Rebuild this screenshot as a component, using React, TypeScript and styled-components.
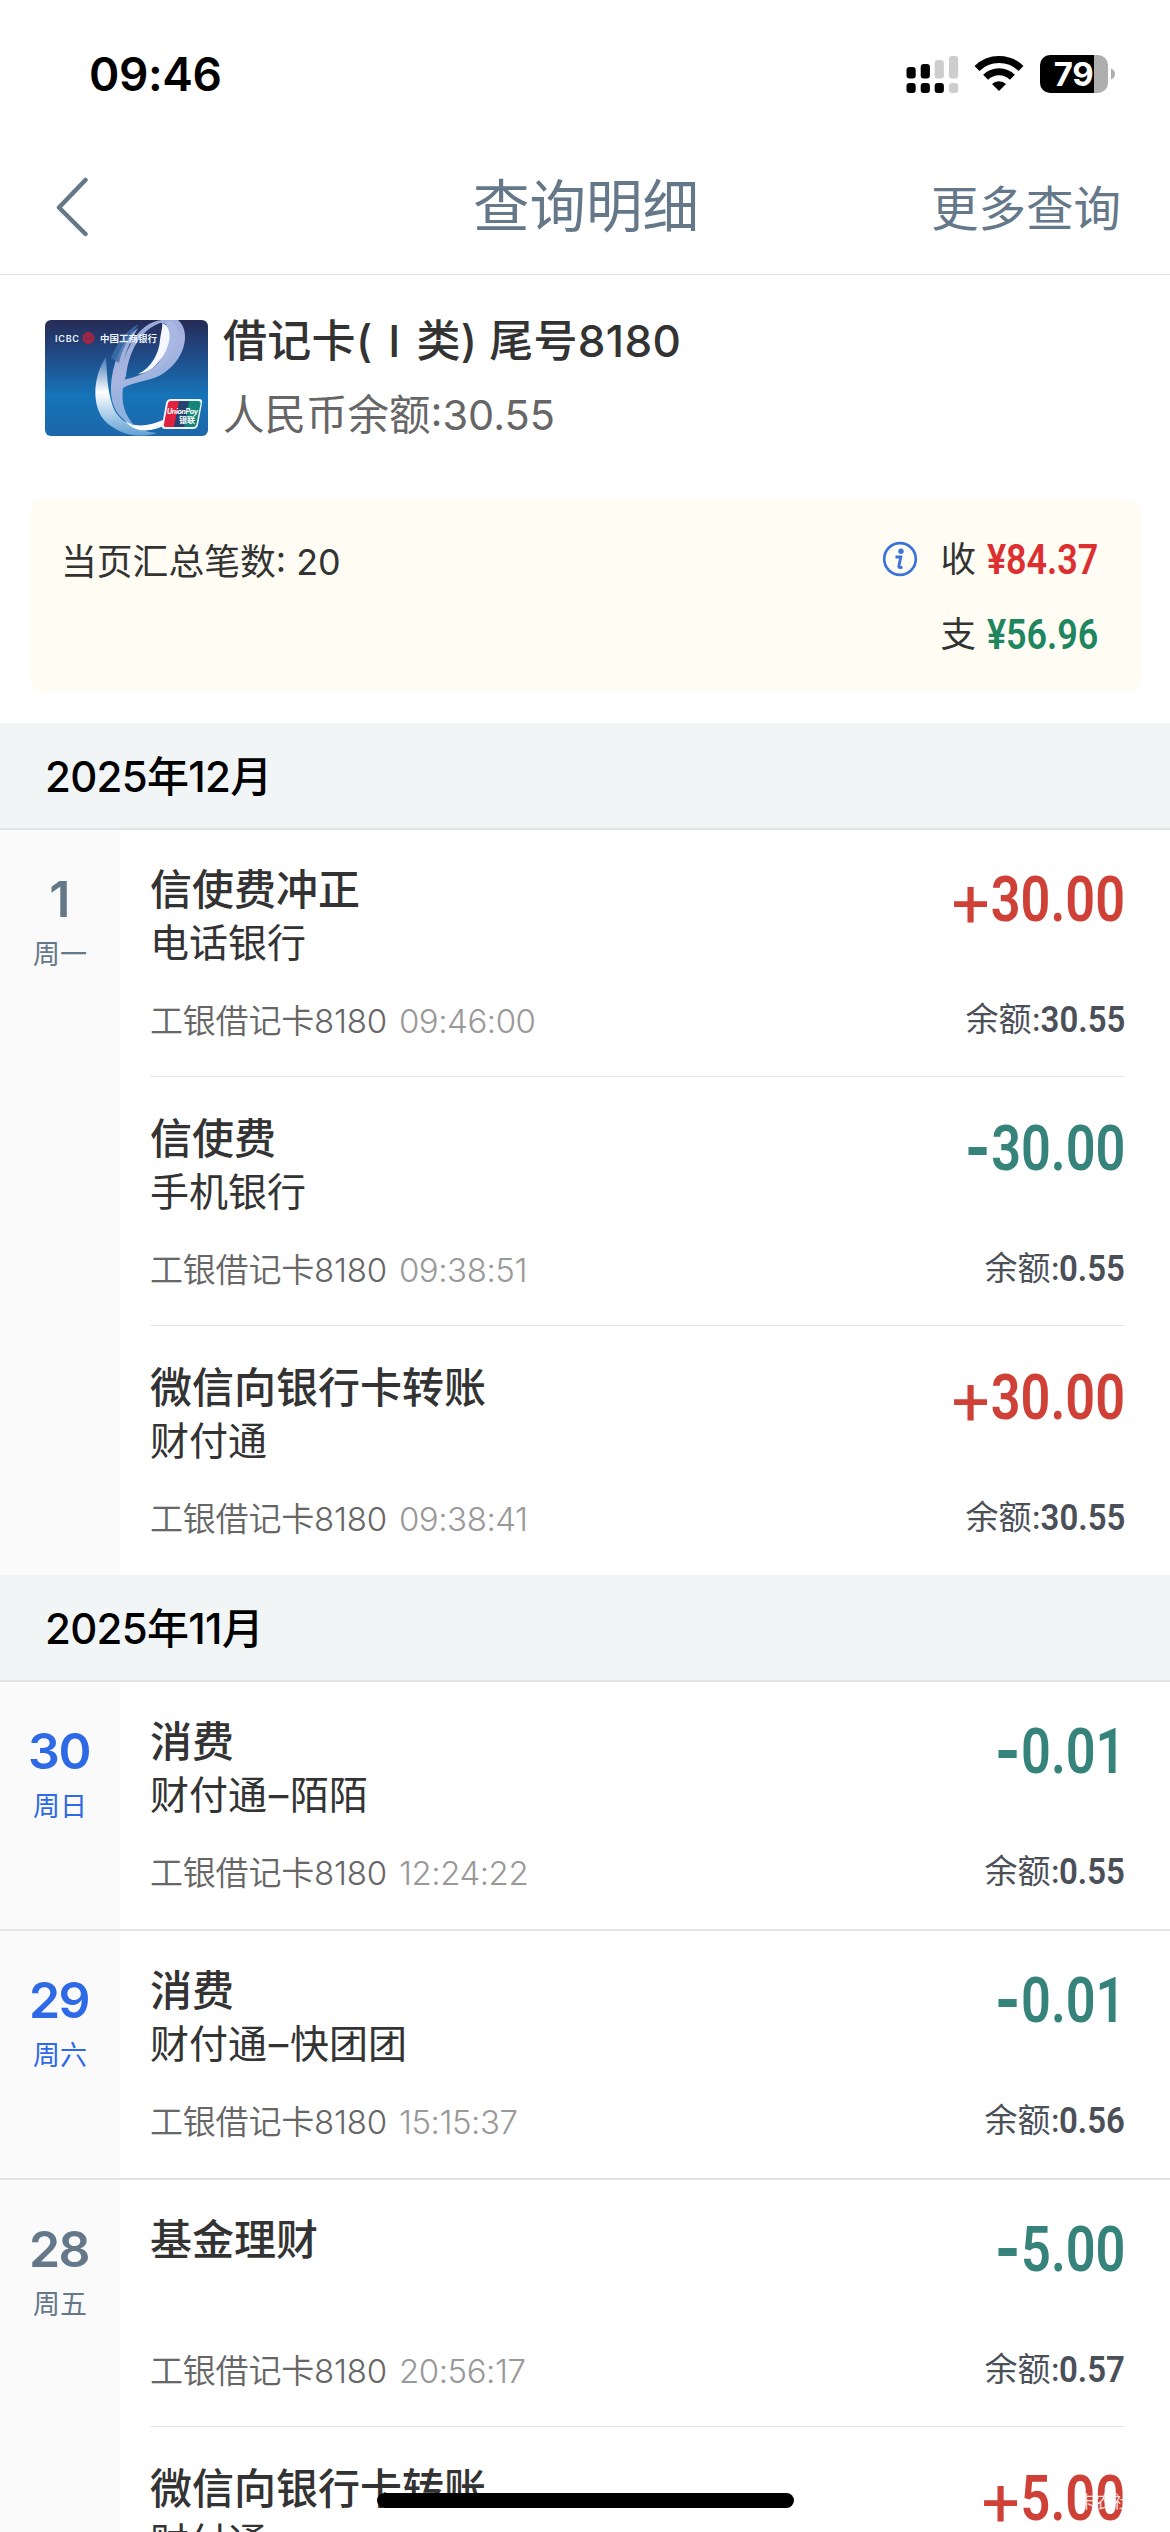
import React from "react";
import styled, { createGlobalStyle } from "styled-components";

const sans = `Inter, "Noto Sans CJK SC", sans-serif`;
const digits = `Roboto, "Noto Sans CJK SC", sans-serif`;

const GlobalStyle = createGlobalStyle`
  * { box-sizing: border-box; }
  body { margin: 0; background: #fff; }
`;

const Screen = styled.div`
  position: relative;
  width: 1170px;
  height: 2532px;
  overflow: hidden;
  background: #fff;
  color: #333;
  font-family: ${sans};
  white-space: nowrap;
`;

const StatusBar = styled.header`
  display: flex;
  justify-content: space-between;
  align-items: center;
  height: 148px;
  padding: 0 54px 0 89px;
`;

const Clock = styled.time`
  font-size: 46px;
  font-weight: 600;
  line-height: 60px;
  letter-spacing: -0.4px;
  color: #000;
`;

const NavBar = styled.nav`
  display: grid;
  grid-template-columns: 1fr auto 1fr;
  align-items: center;
  height: 127px;
  padding: 0 49px 5px 55px;
  border-bottom: 1px solid #e2e4e5;
  color: #64788a;
`;

const BackButton = styled.button`
  display: flex;
  width: 36px;
  height: 62px;
  margin-bottom: 2px;
  padding: 0;
  border: 0;
  background: none;
  color: inherit;
`;

const NavTitle = styled.h1`
  margin: 0 4px 0 0;
  padding-bottom: 4px;
  font-size: 56.5px;
  font-weight: 400;
  line-height: 80px;
`;

const NavAction = styled.a`
  justify-self: end;
  font-size: 47.5px;
  line-height: 70px;
`;

const Account = styled.section`
  display: flex;
  gap: 15px;
  height: 224px;
  padding: 45px 45px 0;
`;

const AccountText = styled.div`
  display: flex;
  flex-direction: column;
  margin-top: -12px;
`;

const AccountName = styled.div`
  font-size: 44px;
  font-weight: 500;
  line-height: 66px;
  letter-spacing: 0.3px;
`;

const Numeral = styled.span`
  display: inline-block;
  width: 44px;
  text-align: center;
`;

const AccountBalance = styled.div`
  margin-top: 9px;
  font-size: 41.5px;
  line-height: 64px;
  color: #666;
`;

const Summary = styled.section`
  display: flex;
  justify-content: space-between;
  height: 193px;
  margin: 0 29px 31px 30px;
  padding: 35px 43px 0 31px;
  border-radius: 14px;
  background: #fffdf3;
`;

const SummaryCount = styled.div`
  padding-top: 1px;
  font-size: 35.8px;
  line-height: 54px;
`;

const Totals = styled.div`
  display: flex;
  flex-direction: column;
  align-items: flex-end;
  gap: 22px;
`;

const TotalLine = styled.div`
  display: flex;
  align-items: center;
  height: 54px;
  margin-top: -1px;
  font-size: 35.5px;
  line-height: 54px;
`;

const InfoIcon = styled.svg`
  width: 36px;
  height: 36px;
  margin: 0 22px 3px 0;
`;

const TotalAmount = styled.span<{ $tone: string }>`
  display: inline-block;
  width: 111px;
  margin-left: 11px;
  direction: rtl;
  font-family: ${digits};
  font-size: 42px;
  font-weight: 600;
  color: ${(p) => p.$tone};
  & > bdi {
    display: inline-block;
    direction: ltr;
    transform: scaleX(0.855);
    transform-origin: right center;
  }
`;

const MonthHeader = styled.h2`
  height: 105px;
  margin: 0;
  padding: 2px 45px 0;
  background: #f1f5f6;
  font-size: 42px;
  font-weight: 500;
  line-height: 104px;
  letter-spacing: -0.7px;
  color: #000;
`;

const DayGroup = styled.section`
  display: flex;
  border-top: 2px solid #e1e3e4;
`;

const DayColumn = styled.aside<{ $weekend?: boolean }>`
  display: flex;
  flex-direction: column;
  align-items: center;
  width: 120px;
  padding-top: 38px;
  background: #fafafa;
  color: ${(p) => (p.$weekend ? "#2e6ae6" : "#64788a")};
`;

const DayNumber = styled.span`
  margin-right: 2px;
  font-size: 50px;
  font-weight: 560;
  line-height: 62px;
  letter-spacing: -1.5px;
`;

const Weekday = styled.span`
  margin-top: 5px;
  font-size: 27px;
  line-height: 40px;
`;

const Entries = styled.div`
  flex: 1;
  padding: 0 45px 0 30px;
`;

const Entry = styled.article`
  display: flex;
  justify-content: space-between;
  height: 249px;
  padding-top: 32px;
  border-bottom: 1px solid #e6e8e9;
  &:first-child {
    height: 247px;
    padding-top: 30px;
  }
  &:last-child {
    border-bottom: 0;
  }
`;

const EntryMain = styled.div`
  display: flex;
  flex-direction: column;
`;

const EntryTitle = styled.div`
  font-size: 42px;
  font-weight: 500;
  line-height: 60px;
`;

const EntrySub = styled.div`
  height: 54px;
  margin-top: -4px;
  font-size: 39px;
  line-height: 54px;
`;

const Dash = styled.span`
  display: inline-flex;
  justify-content: center;
  width: 23px;
`;

const EntryMeta = styled.div`
  margin-top: 27px;
  font-size: 33px;
  line-height: 48px;
  color: #666;
  font-weight: 350;
  letter-spacing: -0.2px;
`;

const EntryTime = styled.span`
  margin-left: 12px;
  letter-spacing: -0.45px;
  color: #999;
`;

const EntrySide = styled.div`
  display: flex;
  flex-direction: column;
  align-items: flex-end;
`;

const Amount = styled.div<{ $income?: boolean }>`
  display: flex;
  height: 80px;
  line-height: 80px;
  font-family: ${digits};
  font-size: 63px;
  font-weight: 560;
  color: ${(p) => (p.$income ? "#cf4037" : "#36837b")};
  transform: scaleX(0.83);
  transform-origin: right center;
`;

const Sign = styled.span<{ $income?: boolean }>`
  display: inline-block;
  padding-top: ${(p) => (p.$income ? 4 : 0)}px;
  margin-right: 1px;
  font-weight: ${(p) => (p.$income ? 400 : 600)};
  font-size: ${(p) => (p.$income ? 69 : 78)}px;
  transform: scaleX(${(p) => (p.$income ? 1.18 : 1.05)});
  transform-origin: right center;
`;

const Balance = styled.div`
  display: flex;
  align-items: center;
  height: 48px;
  margin-top: 55px;
  font-size: 33px;
  line-height: 48px;
  color: #4b4f58;
`;

const BalanceValue = styled.span<{ $width: number }>`
  display: flex;
  justify-content: flex-end;
  width: ${(p) => p.$width}px;
  font-family: ${digits};
  font-size: 37.5px;
  font-weight: 600;
  & > b {
    font-weight: 600;
    transform: scaleX(0.88);
    transform-origin: right center;
  }
`;

const HomeIndicator = styled.div`
  position: absolute;
  left: 377px;
  top: 2493px;
  width: 417px;
  height: 15px;
  border-radius: 8px;
  background: #000;
`;

const Watermark = styled.div`
  position: absolute;
  left: 1078px;
  top: 2490px;
  font-size: 17.5px;
  line-height: 24px;
  color: rgba(255, 255, 255, 0.85);
`;

function StatusIcons() {
  return (
    <svg width="212" height="44" viewBox="904 52 212 44">
      <g fill="#000">
        <rect x="906.5" y="67" width="9.2" height="11.5" rx="3" />
        <rect x="920.7" y="64" width="9.2" height="14.5" rx="3" />
        <rect x="906.5" y="83" width="9.2" height="10" rx="3" />
        <rect x="920.7" y="83" width="9.2" height="10" rx="3" />
        <rect x="934.7" y="83" width="9.2" height="10" rx="3" />
      </g>
      <g fill="#cdcdcd">
        <rect x="934.7" y="60" width="9.2" height="18.5" rx="3" />
        <rect x="949" y="56" width="9.2" height="22.5" rx="3" />
        <rect x="949" y="83" width="9.2" height="10" rx="3" />
      </g>
      <g fill="none" stroke="#000" strokeWidth="7">
        <path d="M977 68.5 A31.5 31.5 0 0 1 1021 68.5" />
        <path d="M985.6 77.2 A19 19 0 0 1 1012.4 77.2" />
      </g>
      <path d="M999 91 L992 84 A10 10 0 0 1 1006 84 Z" fill="#000" />
      <path d="M1050 55 H1094 V93 H1050 A10 10 0 0 1 1040 83 V65 A10 10 0 0 1 1050 55Z" fill="#000" />
      <path d="M1094 55 H1098 A10 10 0 0 1 1108 65 V83 A10 10 0 0 1 1098 93 H1094Z" fill="#aeaeae" />
      <path d="M1111 68.5 Q1115 70 1115 74 Q1115 78 1111 79.5Z" fill="#aeaeae" />
      <text x="1073.5" y="86" textAnchor="middle" fontFamily="Inter" fontSize="33" fontWeight="700" letterSpacing="-0.5" fill="#fff">79</text>
    </svg>
  );
}

const CardArt = styled.svg`
  flex: none;
  width: 163px;
  height: 116px;
`;

function BankCard() {
  return (
    <CardArt viewBox="0 0 163 116">
      <defs>
        <linearGradient id="cardBase" x1="0" y1="0" x2="0" y2="1">
          <stop offset="0" stopColor="#262b56" />
          <stop offset="0.3" stopColor="#204a86" />
          <stop offset="0.65" stopColor="#1674b8" />
          <stop offset="1" stopColor="#1d66aa" />
        </linearGradient>
        <linearGradient id="ribbon" x1="0" y1="0" x2="0.4" y2="1">
          <stop offset="0" stopColor="#8ba4d6" />
          <stop offset="0.5" stopColor="#aab4e0" />
          <stop offset="1" stopColor="#7fb0dd" />
        </linearGradient>
        <linearGradient id="ribbonLight" x1="0" y1="0" x2="0" y2="1">
          <stop offset="0" stopColor="#3e76b6" />
          <stop offset="0.45" stopColor="#ffffff" />
          <stop offset="1" stopColor="#5fa0d4" />
        </linearGradient>
        <clipPath id="cardClip">
          <rect width="163" height="116" rx="6" />
        </clipPath>
      </defs>
      <g clipPath="url(#cardClip)">
        <rect width="163" height="116" fill="url(#cardBase)" />
        <path d="M61 37 C48 56 46 86 60 101 C72 113 92 120 112 113 C92 111 72 102 67 84 C62 68 62 52 61 37Z" fill="url(#ribbonLight)" />
        <path d="M78 98 C86 108 102 107 118 100 L122 104 C106 113 88 114 78 98Z" fill="#fff" />
        <path d="M76 68 C74 36 92 2 117 0 L133 0 C147 12 140 42 114 56 C100 62 88 62 78 68 C76 84 80 96 90 106 C72 99 65 84 66 66 C67 45 76 20 93 8 C82 26 76 44 77 60 C96 57 118 46 125 26 C130 12 125 3 115 3 C96 10 84 30 81 56Z" fill="url(#ribbon)" />
        <path d="M127 1 C140 12 130 40 108 51 C119 37 127 20 120 2Z" fill="#a9b8e2" />
        <path d="M93 54 C106 48 114 34 115 20 C116 12 118 6 117 3 C128 7 126 24 118 36 C111 47 103 53 93 54Z" fill="#f4f7ff" />
        <path d="M66 38 C72 23 81 10 94 4 C83 18 77 29 74 43 Z" fill="#3f71ad" opacity="0.8" />
        <text x="10" y="22" fontFamily="Inter" fontSize="9" fontWeight="600" fill="#eef2fa" textLength="24">ICBC</text>
        <circle cx="43.5" cy="18" r="6" fill="#a72543" />
        <path d="M41 14.5v7M46 14.5v7M40 18h7" stroke="#66325c" strokeWidth="1" />
        <text x="55" y="22" fontFamily="Noto Sans CJK SC" fontSize="9.5" fontWeight="700" fill="#eef2fa" textLength="57">中国工商银行</text>
        <path d="M126 79 H154 Q158 79 157 83 L153 105 Q152 109 148 109 H120 Q116 109 117 105 L121 83 Q122 79 126 79Z" fill="#eaf4fa" />
        <path d="M126 81 H135 L130 107 H121 Q118 107 119 104 L123 83 Q123.500 81 126 81Z" fill="#e0213f" />
        <path d="M134 81 H145 L140 107 H129Z" fill="#24416f" />
        <path d="M144 81 H153 Q156 81 155.500 84 L151.500 104 Q151 107 148 107 H139Z" fill="#168579" />
        <text x="122" y="94" fontFamily="Inter" fontSize="7" fontWeight="700" fontStyle="italic" fill="#fff" textLength="31">UnionPay</text>
        <text x="134" y="103" fontFamily="Noto Sans CJK SC" fontSize="8" fontWeight="700" fill="#fff">银联</text>
      </g>
    </CardArt>
  );
}

type Item = { title: string; sub: string; detail?: string; time: string; amount: string; balance: string };
type Day = { day: string; week: string; weekend?: boolean; items: Item[] };

const december: Day[] = [
  {
    day: "1",
    week: "周一",
    items: [
      { title: "信使费冲正", sub: "电话银行", time: "09:46:00", amount: "+30.00", balance: "30.55" },
      { title: "信使费", sub: "手机银行", time: "09:38:51", amount: "-30.00", balance: "0.55" },
      { title: "微信向银行卡转账", sub: "财付通", time: "09:38:41", amount: "+30.00", balance: "30.55" },
    ],
  },
];

const november: Day[] = [
  { day: "30", week: "周日", weekend: true, items: [{ title: "消费", sub: "财付通", detail: "陌陌", time: "12:24:22", amount: "-0.01", balance: "0.55" }] },
  { day: "29", week: "周六", weekend: true, items: [{ title: "消费", sub: "财付通", detail: "快团团", time: "15:15:37", amount: "-0.01", balance: "0.56" }] },
  {
    day: "28",
    week: "周五",
    items: [
      { title: "基金理财", sub: "", time: "20:56:17", amount: "-5.00", balance: "0.57" },
      { title: "微信向银行卡转账", sub: "财付通", time: "", amount: "+5.00", balance: "" },
    ],
  },
];

function EntryRow({ item }: { item: Item }) {
  const income = item.amount[0] === "+";
  return (
    <Entry>
      <EntryMain>
        <EntryTitle>{item.title}</EntryTitle>
        <EntrySub>
          {item.sub}
          {item.detail && (
            <>
              <Dash>–</Dash>
              {item.detail}
            </>
          )}
        </EntrySub>
        {item.time && (
          <EntryMeta>
            工银借记卡8180<EntryTime>{item.time}</EntryTime>
          </EntryMeta>
        )}
      </EntryMain>
      <EntrySide>
        <Amount $income={income}>
          <Sign $income={income}>{item.amount[0]}</Sign>
          {item.amount.slice(1)}
        </Amount>
        {item.balance && (
          <Balance>
            余额:
            <BalanceValue $width={item.balance.length > 4 ? 84 : 65}>
              <b>{item.balance}</b>
            </BalanceValue>
          </Balance>
        )}
      </EntrySide>
    </Entry>
  );
}

function Days({ days }: { days: Day[] }) {
  return (
    <>
      {days.map((d) => (
        <DayGroup key={d.day}>
          <DayColumn $weekend={d.weekend}>
            <DayNumber>{d.day}</DayNumber>
            <Weekday>{d.week}</Weekday>
          </DayColumn>
          <Entries>
            {d.items.map((item, i) => (
              <EntryRow key={i} item={item} />
            ))}
          </Entries>
        </DayGroup>
      ))}
    </>
  );
}

export default function App() {
  return (
    <Screen>
      <GlobalStyle />
      <StatusBar>
        <Clock>09:46</Clock>
        <StatusIcons />
      </StatusBar>
      <NavBar>
        <BackButton aria-label="返回">
          <svg width="36" height="62" viewBox="0 0 36 62" fill="none" stroke="currentColor" strokeWidth="4.5" strokeLinecap="round" strokeLinejoin="round">
            <path d="M30.500 3 L4 30.500 L30.500 57" />
          </svg>
        </BackButton>
        <NavTitle>查询明细</NavTitle>
        <NavAction>更多查询</NavAction>
      </NavBar>
      <Account>
        <BankCard />
        <AccountText>
          <AccountName>
            借记卡(<Numeral>I</Numeral>类) 尾号8180
          </AccountName>
          <AccountBalance>人民币余额:30.55</AccountBalance>
        </AccountText>
      </Account>
      <Summary>
        <SummaryCount>当页汇总笔数: 20</SummaryCount>
        <Totals>
          <TotalLine>
            <InfoIcon viewBox="0 0 36 36">
              <circle cx="18" cy="18" r="15.800" fill="none" stroke="#3b73d9" strokeWidth="2.700" />
              <circle cx="19" cy="10.300" r="2.700" fill="#3b73d9" />
              <path d="M13.500 16 H18.800 L16.800 25.500 Q16.600 27.300 20.500 26.200" fill="none" stroke="#3b73d9" strokeWidth="2.900" />
            </InfoIcon>
            收
            <TotalAmount $tone="#dc2f31"><bdi>¥84.37</bdi></TotalAmount>
          </TotalLine>
          <TotalLine>
            支
            <TotalAmount $tone="#20865f"><bdi>¥56.96</bdi></TotalAmount>
          </TotalLine>
        </Totals>
      </Summary>
      <MonthHeader>2025年12月</MonthHeader>
      <Days days={december} />
      <MonthHeader>2025年11月</MonthHeader>
      <Days days={november} />
      <HomeIndicator />
      <Watermark>卡农社区</Watermark>
    </Screen>
  );
}
